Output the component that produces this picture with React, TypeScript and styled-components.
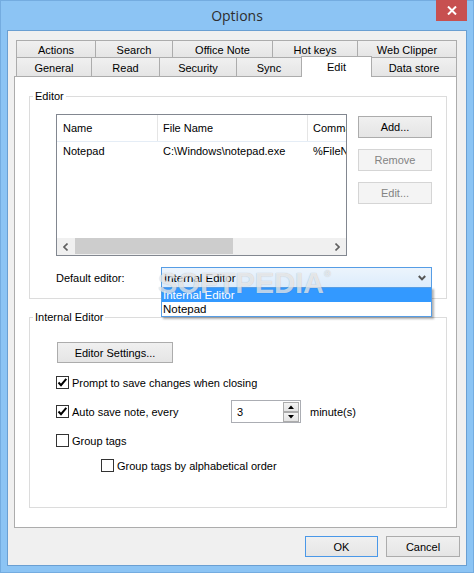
import React from 'react'
import styled, { createGlobalStyle } from 'styled-components'

const GlobalStyle = createGlobalStyle`
  html, body {
    margin: 0;
    padding: 0;
  }
  body {
    font-family: 'Liberation Sans', Arial, sans-serif;
    font-size: 11px;
    color: #000;
  }
`

const Window = styled.div`
  position: relative;
  width: 474px;
  height: 573px;
  box-sizing: border-box;
  background: #8cc4f4;
  border: 1px solid #74ace0;
  display: flex;
  flex-direction: column;
`

const TitleBar = styled.div`
  height: 29px;
  flex: none;
  display: grid;
  grid-template-columns: 1fr auto 1fr;
  align-items: start;
`

const Title = styled.div`
  grid-column: 2;
  font-family: 'Open Sans', 'Noto Sans', sans-serif;
  font-size: 14px;
  line-height: 29px;
  color: #2e2e2e;
`

const CloseButton = styled.div`
  grid-column: 3;
  justify-self: end;
  margin-top: -1px;
  margin-right: 6px;
  width: 31px;
  height: 21px;
  background: #c75050;
  display: flex;
  align-items: center;
  justify-content: center;
`

const Client = styled.div`
  flex: 1;
  margin: 0 6px 6px;
  border: 1px solid #6a9fd2;
  background: #f0f0f0;
  padding: 9px 6px 8px 6px;
  display: flex;
  flex-direction: column;
`

const TabStrip = styled.div`
  margin-left: 2px;
  display: flex;
  flex-direction: column;
`

const TabRow = styled.div<{ $h: number }>`
  display: flex;
  align-items: flex-start;
  height: ${({ $h }) => $h}px;
`

const Tab = styled.div<{ $w: number; $h: number; $active?: boolean }>`
  width: ${({ $w }) => $w}px;
  height: ${({ $h, $active }) => ($active ? $h + 2 : $h)}px;
  box-sizing: border-box;
  border: 1px solid #acacac;
  border-bottom: none;
  margin-left: -1px;
  margin-top: ${({ $active }) => ($active ? '-1px' : '0')};
  background: ${({ $active }) =>
    $active ? '#fff' : 'linear-gradient(#f0f0f0, #e5e5e5)'};
  position: ${({ $active }) => ($active ? 'relative' : 'static')};
  z-index: ${({ $active }) => ($active ? 2 : 'auto')};
  display: flex;
  align-items: center;
  justify-content: center;
  padding-top: ${({ $active }) => ($active ? '0' : '2px')};
  white-space: nowrap;

  &:first-child {
    margin-left: 0;
  }
`

const Panel = styled.div`
  position: relative;
  z-index: 1;
  height: 452px;
  margin-right: 3px;
  box-sizing: border-box;
  border: 1px solid #acacac;
  background: #fff;
  padding: 12px 9px 0 14px;
`

const Group = styled.fieldset<{ $mt?: number }>`
  margin: ${({ $mt }) => $mt ?? 0}px 0 0;
  padding: 0;
  min-width: 0;
  border: 1px solid #dcdcdc;
`

const Legend = styled.legend`
  margin-left: 3px;
  padding: 0 2px;
  height: 14px;
  line-height: 14px;
`

const GroupBody = styled.div<{ $pad: string }>`
  padding: ${({ $pad }) => $pad};
`

const ListRow = styled.div`
  display: flex;
  align-items: flex-start;
  gap: 11px;
`

const ListView = styled.div`
  width: 291px;
  height: 142px;
  box-sizing: border-box;
  border: 1px solid #828790;
  background: #fff;
  display: flex;
  flex-direction: column;
  overflow: hidden;
`

const ListHeader = styled.div`
  display: grid;
  grid-template-columns: 101px 150px 100px;
  height: 27px;
  border-bottom: 1px solid #e5edf6;
  box-sizing: border-box;
`

const HeaderCell = styled.div<{ $pl: number }>`
  border-right: 1px solid #e5e5e5;
  padding-left: ${({ $pl }) => $pl}px;
  display: flex;
  align-items: center;
  white-space: nowrap;
  overflow: hidden;
`

const ListBody = styled.div`
  flex: 1;
`

const ListItem = styled.div`
  display: grid;
  grid-template-columns: 101px 150px 100px;
  height: 17px;
  align-items: center;
`

const Cell = styled.div<{ $pl: number }>`
  padding-left: ${({ $pl }) => $pl}px;
  white-space: nowrap;
  overflow: hidden;
`

const HScroll = styled.div`
  height: 17px;
  display: flex;
  background: #f0f0f0;
`

const ScrollArrow = styled.div`
  width: 17px;
  display: flex;
  align-items: center;
  justify-content: center;
`

const ScrollTrack = styled.div`
  flex: 1;
  display: flex;
`

const ScrollThumb = styled.div`
  margin: 0 0 1px 1px;
  width: 158px;
  background: #cdcdcd;
`

const ButtonColumn = styled.div`
  margin-top: 2px;
  display: flex;
  flex-direction: column;
  gap: 11px;
`

const Button = styled.div<{ $w: number; $h?: number; $disabled?: boolean; $default?: boolean }>`
  width: ${({ $w }) => $w}px;
  height: ${({ $h }) => $h ?? 22}px;
  box-sizing: border-box;
  border: 1px solid
    ${({ $disabled, $default }) =>
      $disabled ? '#d5d5d5' : $default ? '#4a98e8' : '#acacac'};
  background: ${({ $disabled }) =>
    $disabled ? '#f4f4f4' : 'linear-gradient(#f0f0f0, #e5e5e5)'};
  color: ${({ $disabled }) => ($disabled ? '#838383' : '#000')};
  display: flex;
  align-items: center;
  justify-content: center;
  white-space: nowrap;
`

const ComboRow = styled.div`
  margin-top: 11px;
  height: 21px;
  display: flex;
  align-items: center;
`

const FieldLabel = styled.div<{ $w: number }>`
  width: ${({ $w }) => $w}px;
  flex: none;
`

const Combo = styled.div`
  position: relative;
  width: 273px;
  height: 21px;
  box-sizing: border-box;
  border: 1px solid #569de5;
  background: linear-gradient(#ecf4fc, #dcecfc);
  display: flex;
  align-items: center;
  justify-content: space-between;
  padding: 0 5px 0 2px;
`

const DropList = styled.div`
  position: absolute;
  left: -1px;
  top: 100%;
  width: calc(100% + 2px);
  box-sizing: border-box;
  border: 1px solid #569de5;
  background: #fff;
  box-shadow: 2px 2px 2px rgba(0, 0, 0, 0.3);
  z-index: 5;
`

const DropItem = styled.div<{ $selected?: boolean }>`
  height: 14px;
  line-height: 14px;
  padding-left: 1px;
  font-size: 11.5px;
  background: ${({ $selected }) => ($selected ? '#3399ff' : 'transparent')};
  color: ${({ $selected }) => ($selected ? '#fff' : '#000')};
`

const ComboText = styled.span`
  font-size: 11.5px;
`

const CheckRow = styled.div<{ $mt: number; $ml?: number; $h?: number }>`
  margin-top: ${({ $mt }) => $mt}px;
  margin-left: ${({ $ml }) => $ml ?? 0}px;
  height: ${({ $h }) => $h ?? 13}px;
  display: flex;
  align-items: center;
`

const CheckLabel = styled.div<{ $w?: number }>`
  display: flex;
  align-items: center;
  gap: 3px;
  width: ${({ $w }) => ($w ? `${$w}px` : 'auto')};
  white-space: nowrap;
`

const Box = styled.span`
  width: 13px;
  height: 13px;
  box-sizing: border-box;
  border: 1px solid #333;
  background: #fff;
  display: flex;
  align-items: center;
  justify-content: center;
`

const Spin = styled.div`
  width: 70px;
  height: 23px;
  box-sizing: border-box;
  border: 1px solid #abadb3;
  background: #fff;
  display: flex;
  align-items: center;
  justify-content: space-between;
  padding: 0 1px 0 5px;
`

const SpinButtons = styled.div`
  display: flex;
  flex-direction: column;
`

const SpinButton = styled.div`
  width: 16px;
  height: 10px;
  box-sizing: border-box;
  border: 1px solid #acacac;
  background: linear-gradient(#f3f3f3, #e4e4e4);
  display: flex;
  align-items: center;
  justify-content: center;
`

const Unit = styled.span`
  margin-left: 9px;
`

const Footer = styled.div`
  margin-top: 8px;
  display: flex;
  justify-content: flex-end;
  gap: 8px;
`

const Watermark = styled.div`
  position: absolute;
  left: 157px;
  top: 266px;
  font-family: 'Liberation Sans', Arial, sans-serif;
  font-weight: bold;
  font-size: 29px;
  color: rgba(255, 255, 255, 0.7);
  text-shadow: 0 0 1px rgba(0, 0, 0, 0.28);
  pointer-events: none;
  z-index: 10;

  sup {
    font-size: 9px;
    vertical-align: top;
    position: relative;
    top: 2px;
  }
`

const Check = ({ checked }: { checked?: boolean }) => (
  <Box>
    {checked && (
      <svg width='11' height='11' viewBox='0 0 11 11'>
        <path d='M1.5 5.5 L4 8.2 L9.3 1.8' fill='none' stroke='#000' strokeWidth='2' />
      </svg>
    )}
  </Box>
)

const Triangle = ({ up }: { up?: boolean }) => (
  <svg width='6' height='4' viewBox='0 0 6 4'>
    <path d={up ? 'M0 4 L3 0.5 L6 4 Z' : 'M0 0 L3 3.5 L6 0 Z'} fill='#000' />
  </svg>
)

const tabsTop = [
  { label: 'Actions', w: 80 },
  { label: 'Search', w: 78 },
  { label: 'Office Note', w: 101 },
  { label: 'Hot keys', w: 86 },
  { label: 'Web Clipper', w: 100 },
]

const tabsBottom = [
  { label: 'General', w: 76 },
  { label: 'Read', w: 69 },
  { label: 'Security', w: 78 },
  { label: 'Sync', w: 66 },
  { label: 'Edit', w: 71, active: true },
  { label: 'Data store', w: 86 },
]

const App = () => {
  return (
    <>
      <GlobalStyle />
      <Window>
        <TitleBar>
          <Title>Options</Title>
          <CloseButton>
            <svg width='10' height='9' viewBox='0 0 10 9'>
              <path d='M1 0.5 L9 8.5 M9 0.5 L1 8.5' stroke='#fff' strokeWidth='2' />
            </svg>
          </CloseButton>
        </TitleBar>

        <Client>
          <TabStrip>
            <TabRow $h={17}>
              {tabsTop.map((t) => (
                <Tab key={t.label} $w={t.w} $h={17}>
                  {t.label}
                </Tab>
              ))}
            </TabRow>
            <TabRow $h={19}>
              {tabsBottom.map((t) => (
                <Tab key={t.label} $w={t.w} $h={19} $active={t.active}>
                  {t.label}
                </Tab>
              ))}
            </TabRow>
          </TabStrip>

          <Panel>
            <Group>
              <Legend>Editor</Legend>
              <GroupBody $pad='11px 14px 10px 26px'>
                <ListRow>
                  <ListView>
                    <ListHeader>
                      <HeaderCell $pl={6}>Name</HeaderCell>
                      <HeaderCell $pl={5}>File Name</HeaderCell>
                      <HeaderCell $pl={5}>Command</HeaderCell>
                    </ListHeader>
                    <ListBody>
                      <ListItem>
                        <Cell $pl={6}>Notepad</Cell>
                        <Cell $pl={5}>C:\Windows\notepad.exe</Cell>
                        <Cell $pl={5}>%FileName%</Cell>
                      </ListItem>
                    </ListBody>
                    <HScroll>
                      <ScrollArrow>
                        <svg width='5' height='8' viewBox='0 0 5 8'>
                          <path d='M4.5 0.5 L1 4 L4.5 7.5' fill='none' stroke='#606060' strokeWidth='1.6' />
                        </svg>
                      </ScrollArrow>
                      <ScrollTrack>
                        <ScrollThumb />
                      </ScrollTrack>
                      <ScrollArrow>
                        <svg width='5' height='8' viewBox='0 0 5 8'>
                          <path d='M0.5 0.5 L4 4 L0.5 7.5' fill='none' stroke='#606060' strokeWidth='1.6' />
                        </svg>
                      </ScrollArrow>
                    </HScroll>
                  </ListView>
                  <ButtonColumn>
                    <Button $w={74}>Add...</Button>
                    <Button $w={74} $disabled>
                      Remove
                    </Button>
                    <Button $w={74} $disabled>
                      Edit...
                    </Button>
                  </ButtonColumn>
                </ListRow>

                <ComboRow>
                  <FieldLabel $w={105}>Default editor:</FieldLabel>
                  <Combo>
                    <ComboText>Internal Editor</ComboText>
                    <svg width='8' height='6' viewBox='0 0 8 6'>
                      <path d='M0.8 1 L4 4.4 L7.2 1' fill='none' stroke='#555' strokeWidth='2' />
                    </svg>
                    <DropList>
                      <DropItem $selected>Internal Editor</DropItem>
                      <DropItem>Notepad</DropItem>
                    </DropList>
                  </Combo>
                </ComboRow>
              </GroupBody>
            </Group>

            <Group $mt={11}>
              <Legend>Internal Editor</Legend>
              <GroupBody $pad='18px 14px 35px 26px'>
                <Button $w={116} $h={21} style={{ marginLeft: 1 }}>
                  Editor Settings...
                </Button>
                <CheckRow $mt={13}>
                  <CheckLabel>
                    <Check checked />
                    Prompt to save changes when closing
                  </CheckLabel>
                </CheckRow>
                <CheckRow $mt={11} $h={23}>
                  <CheckLabel $w={175}>
                    <Check checked />
                    Auto save note, every
                  </CheckLabel>
                  <Spin>
                    <span>3</span>
                    <SpinButtons>
                      <SpinButton>
                        <Triangle up />
                      </SpinButton>
                      <SpinButton>
                        <Triangle />
                      </SpinButton>
                    </SpinButtons>
                  </Spin>
                  <Unit>minute(s)</Unit>
                </CheckRow>
                <CheckRow $mt={11}>
                  <CheckLabel>
                    <Check />
                    Group tags
                  </CheckLabel>
                </CheckRow>
                <CheckRow $mt={12} $ml={45}>
                  <CheckLabel>
                    <Check />
                    Group tags by alphabetical order
                  </CheckLabel>
                </CheckRow>
              </GroupBody>
            </Group>
          </Panel>

          <Footer>
            <Button $w={73} $h={21} $default>
              OK
            </Button>
            <Button $w={74} $h={21}>
              Cancel
            </Button>
          </Footer>
        </Client>

        <Watermark>
          SOFTPEDIA<sup>®</sup>
        </Watermark>
      </Window>
    </>
  )
}

export default App
